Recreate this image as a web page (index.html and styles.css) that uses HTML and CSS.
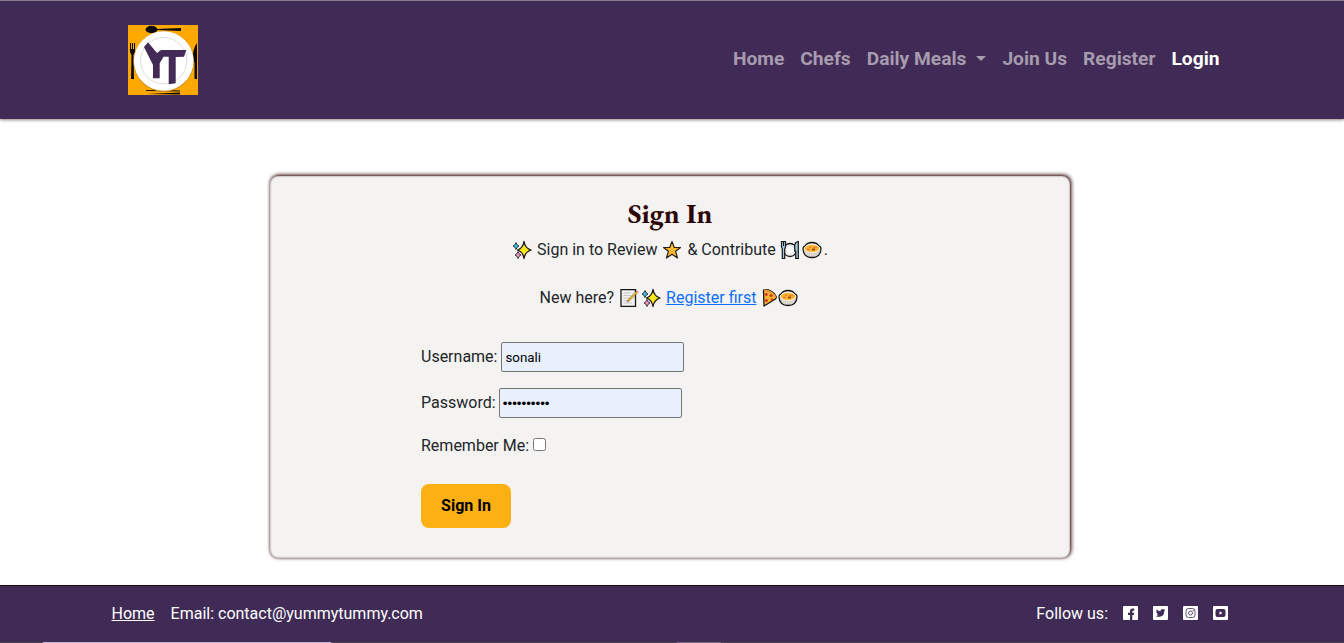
FILE: index.html
```html
<!DOCTYPE html>
<html lang="en">
<head>
<meta charset="utf-8">
<title>Yummy Tummy - Sign In</title>
<link rel="stylesheet" href="styles.css">
</head>
<body>
<svg class="sprites" aria-hidden="true">
  <symbol id="sparkles" viewBox="0 0 22 22">
    <path d="M13 2.500Q14 9 20 11Q14 13 13 19.500Q12 13 6.500 11Q12 9 13 2.500Z" fill="#ffe81c" stroke="#161616" stroke-width="1.300" stroke-linejoin="round"/>
    <path d="M5 3.500Q5.500 6 8 7Q5.500 8 5 10.500Q4.500 8 2 7Q4.500 6 5 3.500Z" fill="#35bde8" stroke="#161616" stroke-width=".8"/>
    <path d="M7 12.500Q7.500 15 10 16Q7.500 17 7 19.500Q6.500 17 4 16Q6.500 15 7 12.500Z" fill="#f394c4" stroke="#161616" stroke-width=".8"/>
  </symbol>
  <symbol id="star" viewBox="0 0 22 22">
    <path d="M11 2.500L13.300 8.500H19.500L14.600 12.300L16.500 19L11 15.200L5.500 19L7.400 12.300L2.500 8.500H8.700Z" fill="#fdb92e" stroke="#2a2114" stroke-width="1.200" stroke-linejoin="round"/>
  </symbol>
  <symbol id="plate" viewBox="0 0 22 22">
    <circle cx="11" cy="11" r="6.500" fill="#fff" stroke="#161616" stroke-width="1.300"/>
    <circle cx="11" cy="11" r="4.300" fill="#fff" stroke="#c8c8c8" stroke-width=".7"/>
    <path d="M2.500 2.500H6.500V8L5.700 10V19.500H3.300V10L2.500 8Z" fill="#a7cbdc" stroke="#161616" stroke-width="1.200"/>
    <path d="M4.500 3V7" stroke="#161616"/>
    <path d="M19.300 2.500V19.500H16.700V12H15.700V6Q16 3 19.300 2.500Z" fill="#a7cbdc" stroke="#161616" stroke-width="1.200"/>
  </symbol>
  <symbol id="bowl" viewBox="0 0 22 22">
    <path d="M4 7Q6 3.500 11 3.500T18 7Q20 7.500 20 10Q19.500 18.500 11 18.500T2 10Q2 7.500 4 7Z" fill="#d8d6cf" stroke="#161616" stroke-width="1.300"/>
    <ellipse cx="11" cy="9.500" rx="7.600" ry="4" fill="#fbb72f" stroke="#fff" stroke-width=".7"/>
    <path d="M11 10.500H14" stroke="#8c4820" stroke-width="1.800"/>
    <path d="M12 8.500H16M6 10.500H9M8 8H10" stroke="#f27825" stroke-width="1.300"/>
  </symbol>
  <symbol id="memo" viewBox="0 0 22 22">
    <path d="M3 2.700H17.500V19.300H3Z" fill="#f2f2f2" stroke="#161616" stroke-width="1.300"/>
    <path d="M5.500 6H13M5.500 8.500H13M5.500 11H12M5.500 13.500H9M5.500 16H14" stroke="#bbb" stroke-width=".8"/>
    <path d="M9 15L10 12.500L18.700 4L20 5.300L11.500 13.800Z" fill="#fdb92e" stroke="#6b5a3a" stroke-width=".6"/>
    <path d="M18.500 4L20 5.500" stroke="#ed7986" stroke-width="1.500"/>
  </symbol>
  <symbol id="pizza" viewBox="0 0 22 22">
    <path d="M4.500 3Q8 2 12 4T17.500 10L16.500 12L5 19Z" fill="#fdb92e" stroke="#161616" stroke-width="1.300" stroke-linejoin="round"/>
    <path d="M5 3.500Q12 3 17 10.500" fill="none" stroke="#e79343" stroke-width="1.800"/>
    <circle cx="7.300" cy="7.500" r="1.400" fill="#d82b26"/><circle cx="12" cy="8.500" r="1.500" fill="#d82b26"/>
    <circle cx="7.500" cy="13.500" r="1.500" fill="#d82b26"/><circle cx="13" cy="12.500" r="1.200" fill="#d82b26"/>
  </symbol>
</svg>

<header class="site-header">
  <svg class="logo" viewBox="0 0 70 70" role="img" aria-label="Yummy Tummy">
    <path fill="#ffa900" d="M0 0H70V70H0Z"/>
    <g fill="#090909">
      <ellipse cx="23.500" cy="4.500" rx="6" ry="3.700"/><path d="M28 4L53 3V6L28 5Z"/>
      <path d="M2 18H3V24H4V18H5V24H6V18H7V27L5.500 30L6 54H3L3.500 30L2 27Z"/>
      <path d="M69 18V54H66.500V37H65Q64 24 69 18Z"/>
      <path d="M18 65L52 65.500V66.500L18 66ZM18 69L52 67.500V69.500Z"/>
    </g>
    <circle cx="35.700" cy="36.500" r="30.300" fill="#c98914"/>
    <circle cx="35.700" cy="36" r="29.800" fill="#fff"/>
    <circle cx="35.700" cy="35.700" r="23.200" fill="#fff" stroke="#dedede"/>
    <path fill="#432b57" d="M20 17.300L29 28L33 25H58.300L56 31.700L47.700 32V58.300L40.700 59.300V31.700H35.500L31.700 38.300V53.300H25V40L16 22Z"/>
  </svg>
  <nav class="nav">
    <a>Home</a><a>Chefs</a><a class="dropdown">Daily Meals</a><a>Join Us</a><a>Register</a><a class="active">Login</a>
  </nav>
</header>

<main class="card">
  <h1>Sign In</h1>
  <p class="intro"><svg class="emoji"><use href="#sparkles"/></svg> Sign in to Review <svg class="emoji"><use href="#star"/></svg> &amp; Contribute <svg class="emoji"><use href="#plate"/></svg><svg class="emoji"><use href="#bowl"/></svg>.</p>
  <p class="intro second">New here? <svg class="emoji"><use href="#memo"/></svg><svg class="emoji"><use href="#sparkles"/></svg> <a class="link" href="#">Register first</a> <svg class="emoji pizza"><use href="#pizza"/></svg><svg class="emoji"><use href="#bowl"/></svg></p>
  <form class="form">
    <div class="field"><label for="user">Username:</label><input class="text" id="user" type="text" value="sonali"></div>
    <div class="field password"><label for="pass">Password:</label><input class="text" id="pass" type="password" value="abcdefghij"></div>
    <div class="remember"><label for="rem">Remember Me:</label><input id="rem" type="checkbox"></div>
    <button class="submit" type="button">Sign In</button>
  </form>
</main>

<footer class="site-footer">
  <div class="contact"><a class="home" href="#">Home</a><span>Email: contact@yummytummy.com</span></div>
  <div class="social"><span>Follow us:</span>
    <svg viewBox="0 0 15 14"><rect width="15" height="14" rx="1" fill="#fff"/><path d="M7 14V9H5V6.700H7V5Q7 2.500 9.500 2.500H11.200V4.700H10Q9.300 4.700 9.300 5.500V6.700H11.200L10.900 9H9.300V14Z" fill="#402b56"/></svg>
    <svg viewBox="0 0 15 14"><rect width="15" height="14" rx="1" fill="#fff"/><path d="M12.300 4.200L11.300 5Q11.200 10.500 6.500 10.800Q4.200 11 2.800 9.900Q4.500 10 5.600 9.100Q4.200 8.900 3.800 7.700H4.700Q3.200 7.100 3.200 5.500L4.100 5.800Q2.800 4.700 3.600 3.200Q5.200 5.100 7.500 5.200Q7.200 3 9.200 2.900Q10 2.900 10.600 3.500L11.900 3L11.200 4.200Z" fill="#402b56"/></svg>
    <svg viewBox="0 0 15 14"><rect width="15" height="14" rx="1" fill="#fff"/><rect x="3" y="2.500" width="9" height="9" rx="2.500" fill="none" stroke="#402b56" stroke-width=".8"/><circle cx="7.500" cy="7" r="2" fill="none" stroke="#402b56" stroke-width=".8"/><circle cx="10.200" cy="4.300" r=".6" fill="#402b56"/></svg>
    <svg viewBox="0 0 15 14"><rect width="15" height="14" rx="1" fill="#fff"/><rect x="2.500" y="3" width="10" height="8" rx="2" fill="#402b56"/><path d="M6.500 5.200L9.500 7L6.500 8.800Z" fill="#fff"/></svg>
  </div>
  <i class="edge"></i><i class="edge small"></i>
</footer>
</body>
</html>
```
FILE: styles.css
```css
* { box-sizing: border-box; }
body { margin: 0; height: 643px; overflow: hidden; background: #fff; color: #212529; font: 16px/24px Roboto, sans-serif; display: flex; flex-direction: column; }
.sprites { position: absolute; width: 0; height: 0; }
.site-header { height: 119px; flex: none; padding: 0 124.5px 0 128px; background: #402b56; border-top: 1px solid #85798f; box-shadow: 0 1px 3px #2e050580; display: flex; align-items: center; justify-content: space-between; }
.logo { width: 70px; height: 70px; }
.nav { display: flex; gap: 16px; font-size: 19.2px; font-weight: 700; color: #a79bae; padding-bottom: 3px; }
.nav .active { color: #fff; }
.dropdown::after { content: ""; display: inline-block; margin-left: 10px; vertical-align: 4px; border: 5px solid transparent; border-top-color: #a79bae; border-bottom: 0; }
.card { width: 800px; height: 382px; flex: none; margin: 57px auto 0 270px; padding-top: 20px; background: #f4f3f2; border-radius: 8px; box-shadow: 1px -1px 4px #2e0505, 0 0 3px #2e050566, inset 0 0 2px #2e050599; }
h1 { margin: 0; height: 42px; text-align: center; font: 700 28px/35px "EB Garamond", "Liberation Serif", serif; color: #2e0505; }
.intro { margin: 0; height: 24px; padding-right: 1px; text-align: center; white-space: nowrap; }
.second { margin-top: 24px; padding-right: 0; }
.emoji { width: 22px; height: 22px; vertical-align: -5px; margin: 0 0 -1px; position: relative; left: -.5px; }
.pizza { margin-right: -4px; left: -1px; }
.pizza + .emoji { left: -1px; }
.link { color: #0d6efd; }
.form { padding: 32px 0 0 151px; }
.field { display: flex; align-items: center; gap: 4px; height: 30px; margin-bottom: 16px; }
.password { gap: 3.3px; }
.text { width: 183px; height: 30px; padding: 1px 3px; border: 1px solid #767676; border-radius: 2px; background: #e8f0fe; color: #000; font: 13.333px Roboto, sans-serif; }
.password .text { font-family: "Liberation Sans", sans-serif; }
.remember { display: flex; align-items: center; height: 24px; }
.remember input { width: 13px; height: 13px; margin: 0 0 4px 4px; }
.submit { display: block; width: 90px; height: 44px; margin-top: 26px; padding: 0 0 2px; border: 0; border-radius: 8px; background: #fcb013; color: #000; font: 700 16px Roboto, sans-serif; }
.site-footer { position: relative; height: 58px; flex: none; margin-top: 27px; padding: 0 116px 1px 111.5px; border-top: 1px solid #2e0505; border-bottom: 1px solid #4b454c; background: #402b56; color: #fff; display: flex; align-items: center; justify-content: space-between; }
.contact { display: flex; gap: 16px; }
.home { color: #fff; }
.social { display: flex; align-items: center; gap: 15px; }
.social svg { width: 15px; height: 14px; margin-bottom: 2px; }
.edge { position: absolute; left: 43px; bottom: -1px; width: 288px; height: 1px; background: #c5bbc9; }
.small { left: 677px; width: 44px; background: #746879; }
```
